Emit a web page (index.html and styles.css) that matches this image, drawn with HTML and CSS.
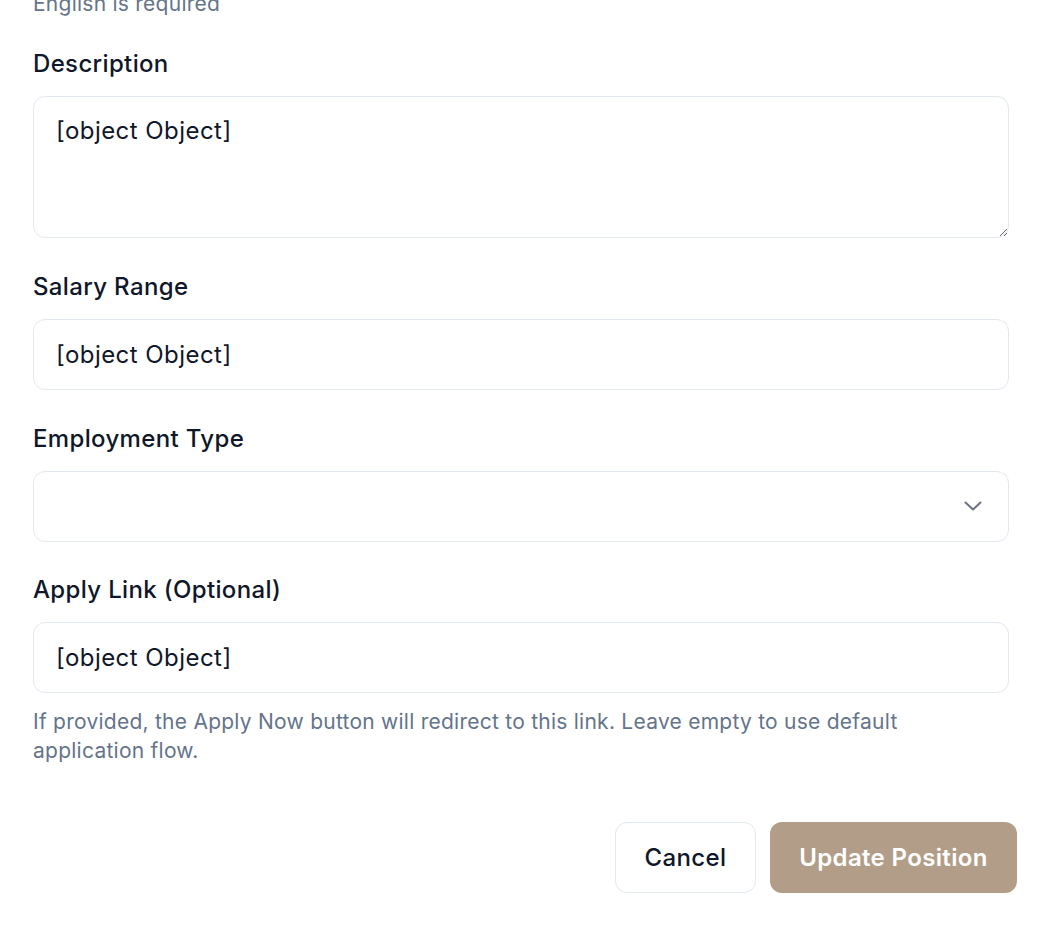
FILE: index.html
```html
<!DOCTYPE html>
<html lang="en">
<head>
<meta charset="utf-8">
<title>Edit Position</title>
<link rel="stylesheet" href="styles.css">
</head>
<body>
<form class="form">
  <p class="error-text">English is required</p>
  <div class="field field-first">
    <label class="label" for="desc">Description</label>
    <textarea id="desc" class="control textarea">[object Object]</textarea>
  </div>
  <div class="field">
    <label class="label" for="salary">Salary Range</label>
    <input id="salary" class="control input" type="text" value="[object Object]">
  </div>
  <div class="field">
    <label class="label" for="type">Employment Type</label>
    <div class="select-wrap">
      <select id="type" class="control select">
        <option value=""></option>
      </select>
      <svg class="chevron" width="18" height="10" viewBox="0 0 18 10" aria-hidden="true">
        <path d="M1.5 1.5 L9 8.5 L16.5 1.5" fill="none" stroke="#6b7280" stroke-width="2" stroke-linecap="round" stroke-linejoin="round"/>
      </svg>
    </div>
  </div>
  <div class="field field-last">
    <label class="label" for="apply">Apply Link (Optional)</label>
    <input id="apply" class="control input" type="text" value="[object Object]">
    <p class="help">If provided, the Apply Now button will redirect to this link. Leave empty to use default application flow.</p>
  </div>
  <div class="actions">
    <button type="button" class="btn btn-cancel">Cancel</button>
    <button type="button" class="btn btn-primary">Update Position</button>
  </div>
</form>
</body>
</html>
```
FILE: styles.css
```css
html, body {
  margin: 0;
  padding: 0;
  background: #ffffff;
}
body {
  font-family: Inter, "Noto Sans", sans-serif;
  color: #0f172a;
  overflow: hidden;
}
.form {
  width: 976px;
  margin-left: 33px;
  margin-top: -11px;
  display: flex;
  flex-direction: column;
}
.error-text {
  margin: 0;
  font-size: 21px;
  line-height: 29px;
  letter-spacing: 0.25px;
  color: #64748b;
}
.field {
  display: flex;
  flex-direction: column;
  margin-top: 32px;
}
.field-first {
  margin-top: 29px;
}
.field-last {
  margin-top: 31px;
}
.label {
  font-size: 24px;
  line-height: 33px;
  font-weight: 500;
  letter-spacing: 0.35px;
  color: #0f172a;
  margin-bottom: 16px;
}
.control {
  box-sizing: border-box;
  width: 100%;
  border: 1px solid #e2e8f0;
  border-radius: 12px;
  background: #ffffff;
  font-family: Inter, "Noto Sans", sans-serif;
  font-size: 24px;
  letter-spacing: 0.45px;
  color: #0f172a;
  outline: none;
  margin: 0;
}
.textarea {
  height: 142px;
  padding: 16px 22px;
  line-height: 36px;
  resize: vertical;
  display: block;
}
.input {
  height: 71px;
  padding: 0 22px;
  line-height: 36px;
}
.select-wrap {
  position: relative;
}
.select {
  height: 71px;
  padding: 0 22px;
  appearance: none;
  -webkit-appearance: none;
  display: block;
}
.chevron {
  position: absolute;
  right: 27px;
  top: 30px;
  pointer-events: none;
}
.help {
  margin: 14px 0 0;
  font-size: 21px;
  line-height: 29px;
  letter-spacing: 0.25px;
  color: #64748b;
}
.actions {
  display: flex;
  justify-content: flex-end;
  gap: 14px;
  margin-top: 57px;
  margin-right: -8px;
}
.btn {
  box-sizing: border-box;
  height: 71px;
  border-radius: 12px;
  font-family: Inter, "Noto Sans", sans-serif;
  font-size: 24px;
  font-weight: 500;
  letter-spacing: 0.35px;
  cursor: pointer;
  margin: 0;
}
.btn-cancel {
  width: 141px;
  border: 1px solid #e2e8f0;
  background: #ffffff;
  color: #0f172a;
}
.btn-primary {
  width: 247px;
  border: none;
  background: #b29e88;
  color: #ffffff;
  font-weight: 600;
}
```
